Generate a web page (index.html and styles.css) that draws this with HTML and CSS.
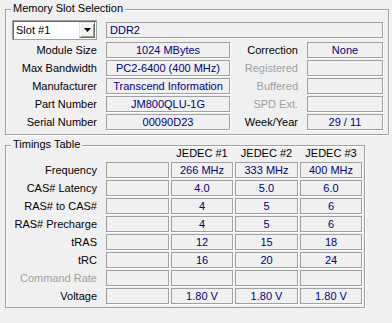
FILE: index.html
```html
<!DOCTYPE html>
<html>
<head>
<meta charset="utf-8">
<link rel="stylesheet" href="styles.css">
</head>
<body>
<div class="window">
  <section class="group slot">
    <span class="legend">Memory Slot Selection</span>
    <div class="slot-grid">
      <div class="combo">
        <span class="combo-text">Slot #1</span>
        <span class="combo-btn"><svg width="7" height="4" viewBox="0 0 7 4"><polygon points="0,0 7,0 3.5,4" fill="#000"/></svg></span>
      </div>
      <div class="field ddr">DDR2</div>

      <div class="lbl">Module Size</div><div class="field">1024 MBytes</div>
      <div class="lbl">Correction</div><div class="field">None</div>

      <div class="lbl">Max Bandwidth</div><div class="field">PC2-6400 (400 MHz)</div>
      <div class="lbl dis">Registered</div><div class="field"></div>

      <div class="lbl">Manufacturer</div><div class="field">Transcend Information</div>
      <div class="lbl dis">Buffered</div><div class="field"></div>

      <div class="lbl">Part Number</div><div class="field">JM800QLU-1G</div>
      <div class="lbl dis">SPD Ext.</div><div class="field"></div>

      <div class="lbl">Serial Number</div><div class="field">00090D23</div>
      <div class="lbl">Week/Year</div><div class="field">29 / 11</div>
    </div>
  </section>

  <section class="group timings">
    <span class="legend">Timings Table</span>
    <div class="t-grid">
      <div></div><div></div>
      <div class="head">JEDEC #1</div><div class="head">JEDEC #2</div><div class="head">JEDEC #3</div>

      <div class="lbl">Frequency</div><div class="field"></div>
      <div class="field">266 MHz</div><div class="field">333 MHz</div><div class="field">400 MHz</div>

      <div class="lbl">CAS# Latency</div><div class="field"></div>
      <div class="field">4.0</div><div class="field">5.0</div><div class="field">6.0</div>

      <div class="lbl">RAS# to CAS#</div><div class="field"></div>
      <div class="field">4</div><div class="field">5</div><div class="field">6</div>

      <div class="lbl">RAS# Precharge</div><div class="field"></div>
      <div class="field">4</div><div class="field">5</div><div class="field">6</div>

      <div class="lbl">tRAS</div><div class="field"></div>
      <div class="field">12</div><div class="field">15</div><div class="field">18</div>

      <div class="lbl">tRC</div><div class="field"></div>
      <div class="field">16</div><div class="field">20</div><div class="field">24</div>

      <div class="lbl dis">Command Rate</div><div class="field"></div>
      <div class="field"></div><div class="field"></div><div class="field"></div>

      <div class="lbl">Voltage</div><div class="field"></div>
      <div class="field">1.80 V</div><div class="field">1.80 V</div><div class="field">1.80 V</div>
    </div>
  </section>
</div>
</body>
</html>
```

FILE: styles.css
```css
html, body {
  margin: 0;
  background: #f0f0f0;
}
body {
  font-family: "Liberation Sans", Arial, sans-serif;
  font-size: 11px;
  color: #000;
}
.window {
  padding: 9px 0 0 5px;
}
.group {
  position: relative;
  box-sizing: border-box;
  border: 1px solid #a0a0a0;
  box-shadow: inset 1px 1px 0 #fff, 1px 1px 0 #fff;
}
.legend {
  position: absolute;
  top: -8px;
  left: 5px;
  padding: 0 2px;
  line-height: 13px;
  background: #f0f0f0;
  color: #000;
  white-space: nowrap;
}
.slot {
  width: 384px;
  padding: 10px 5px 4px 6px;
}
.timings {
  width: 360px;
  margin-top: 10px;
  padding: 0 2px 3px 6px;
}
.slot-grid {
  display: grid;
  grid-template-columns: 94px 124px 77px 76px;
  grid-template-rows: 20px repeat(5, 16px);
  row-gap: 2px;
}
.t-grid {
  display: grid;
  grid-template-columns: 92px 63px 62px 63px 62px;
  grid-template-rows: 14px repeat(8, 16px);
  column-gap: 2px;
  row-gap: 2px;
}
.lbl {
  text-align: right;
  padding-right: 9px;
  line-height: 16px;
  white-space: nowrap;
}
.t-grid .lbl {
  padding-right: 7px;
}
.lbl.dis {
  color: #a0a0a0;
}
.head {
  text-align: center;
  line-height: 14px;
  white-space: nowrap;
}
.field {
  box-sizing: border-box;
  height: 16px;
  border: 1px solid #a0a0a0;
  box-shadow: 1px 1px 0 #fff;
  line-height: 14px;
  text-align: center;
  color: #000080;
  white-space: nowrap;
  overflow: hidden;
}
.ddr {
  grid-column: 2 / 5;
  align-self: center;
  text-align: left;
  padding-left: 3px;
}
.combo {
  box-sizing: border-box;
  width: 85px;
  height: 20px;
  display: flex;
  background: #fff;
  border: 1px solid #a0a0a0;
  box-shadow: inset 1px 1px 0 #696969;
  padding: 1px;
}
.combo-text {
  flex: 1;
  padding-left: 2px;
  line-height: 16px;
  color: #000;
  white-space: nowrap;
}
.combo-btn {
  box-sizing: border-box;
  width: 16px;
  height: 16px;
  display: flex;
  align-items: center;
  justify-content: center;
  background: #f0f0f0;
  border: 1px solid;
  border-color: #e3e3e3 #696969 #696969 #e3e3e3;
  box-shadow: inset 1px 1px 0 #fff, inset -1px -1px 0 #a0a0a0;
}
.combo-btn svg {
  display: block;
}
```
